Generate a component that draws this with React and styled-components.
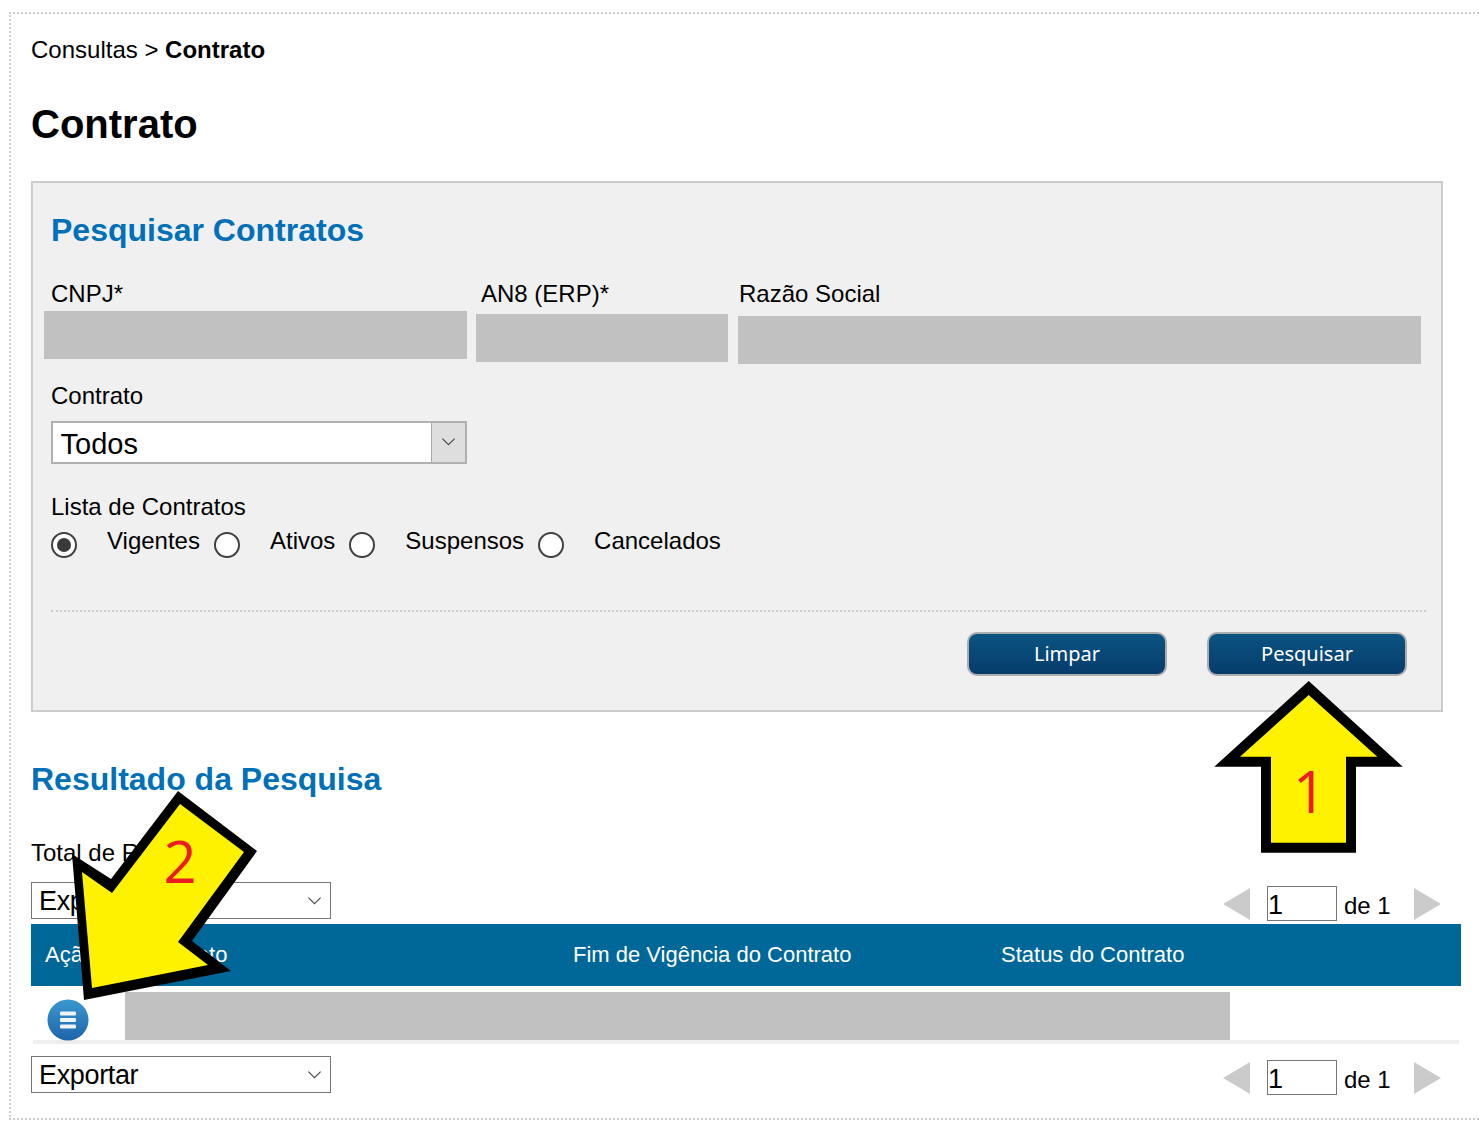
import React from 'react';
import styled, { createGlobalStyle } from 'styled-components';

const GlobalStyle = createGlobalStyle`
  html, body {
    margin: 0;
    padding: 0;
    overflow: hidden;
    background: #fff;
  }
  body {
    font-family: "Liberation Sans", Arial, sans-serif;
    font-size: 24px;
    color: #000;
  }
`;

const Page = styled.div`
  position: relative;
  width: 1479px;
  height: 1148px;
  padding-top: 12px;
  box-sizing: border-box;
`;

const Frame = styled.div`
  margin-left: 9px;
  border: 2px dotted #ccc;
  border-right: none;
  padding: 22px 0 23px 20px;
`;

const Breadcrumb = styled.div`
  line-height: 28px;
  b {
    font-weight: 700;
  }
`;

const Title = styled.h1`
  margin: 37px 0 34px;
  font-size: 40px;
  line-height: 46px;
  font-weight: 700;
`;

const Panel = styled.section`
  width: 1412px;
  box-sizing: border-box;
  border: 2px solid #ccc;
  background: #f0f0f0;
  padding: 29px 15px 34px 18px;
`;

const SectionTitle = styled.h2`
  margin: 0;
  font-size: 32px;
  line-height: 36px;
  font-weight: 700;
  color: #0070b9;
`;

const FieldRow = styled.div`
  display: flex;
  margin-top: 32px;
`;

const Field = styled.div`
  width: ${(p) => p.$width}px;
  flex: none;
`;

const Label = styled.div`
  line-height: 28px;
`;

const Redacted = styled.div`
  height: 48px;
  background: #c1c1c1;
  width: ${(p) => p.$width}px;
  margin-left: ${(p) => p.$shift}px;
  margin-top: ${(p) => p.$drop}px;
`;

const ContractLabel = styled(Label)`
  margin-top: 18px;
  margin-bottom: 11px;
`;

const ContractSelect = styled.div`
  display: flex;
  width: 416px;
  height: 43px;
  box-sizing: border-box;
  border: 2.5px solid #b0b0b0;
  background: #fff;
`;

const ContractValue = styled.div`
  flex: 1;
  padding-left: 7.5px;
  font-size: 29px;
  line-height: 42px;
`;

const ContractArrow = styled.div`
  width: 33px;
  display: flex;
  align-items: center;
  justify-content: center;
  background: #dedede;
  border-left: 1px solid #aaa;
`;

const ListLabel = styled(Label)`
  margin-top: 29px;
`;

const RadioRow = styled.div`
  display: flex;
  align-items: flex-start;
  margin-top: 6px;
  height: 31px;
`;

const Radio = styled.input.attrs({ type: 'radio', name: 'lista' })`
  appearance: none;
  flex: none;
  position: relative;
  width: 26px;
  height: 26px;
  box-sizing: border-box;
  margin: 5px 30px 0 0;
  border: 2px solid #404040;
  border-radius: 50%;
  background: #fff;
  &:checked::after {
    content: '';
    position: absolute;
    left: 4px;
    top: 4px;
    width: 14px;
    height: 14px;
    border-radius: 50%;
    background: #3a3a3a;
  }
`;

const RadioText = styled.label`
  line-height: 28px;
  margin-right: 14px;
`;

const Divider = styled.div`
  margin-top: 52px;
  border-top: 2px dotted #ccc;
`;

const Actions = styled.div`
  display: flex;
  justify-content: flex-end;
  gap: 40px;
  margin: 20px 19px 0 0;
`;

const Button = styled.button`
  width: 200px;
  height: 44px;
  box-sizing: border-box;
  border: 2px solid #adadad;
  border-radius: 10px;
  background: linear-gradient(#0a5482, #063c6b);
  color: #fff;
  font-family: "Noto Sans", sans-serif;
  font-size: 20px;
  padding: 0 0 2px;
`;

const ResultTitle = styled(SectionTitle)`
  margin-top: 49px;
`;

const Total = styled.div`
  margin-top: 42px;
  line-height: 28px;
`;

const Toolbar = styled.div`
  display: flex;
  justify-content: space-between;
  align-items: flex-start;
  width: 1430px;
  height: 39px;
  margin-top: ${(p) => p.$top}px;
`;

const ExportSelect = styled.div`
  display: flex;
  align-items: center;
  justify-content: space-between;
  width: 300px;
  height: 37px;
  box-sizing: border-box;
  border: 1.5px solid #767676;
  padding: 2px 7px 0 7px;
  font-size: 27px;
  letter-spacing: -0.35px;
  color: #000;
`;

const Pager = styled.div`
  display: flex;
  align-items: flex-start;
  margin: 4px 20px 0 0;
  height: 35px;
`;

const PageInput = styled.input`
  width: 70px;
  height: 35px;
  box-sizing: border-box;
  margin: 0 7px 0 17px;
  border: 1.5px solid #767676;
  padding: 3px 0 0 0;
  font-family: "Liberation Sans", Arial, sans-serif;
  font-size: 27px;
  color: #000;
`;

const PageOf = styled.span`
  width: 70px;
  line-height: 40px;
`;

const PageArrow = styled.svg`
  display: block;
  width: 27px;
  height: 32px;
  margin-top: 2px;
  fill: #cbcbcb;
  filter: blur(0.4px);
`;

const TableHead = styled.div`
  display: grid;
  grid-template-columns: 98px 430px 428px 1fr;
  align-items: center;
  width: 1430px;
  height: 62px;
  box-sizing: border-box;
  margin-top: 3px;
  padding: 0 0 0 14px;
  background: #006799;
  color: #fff;
  font-size: 22px;
`;

const TableRow = styled.div`
  display: flex;
  align-items: flex-start;
  width: 1426px;
  height: 54px;
  margin-left: 2px;
  box-sizing: content-box;
  border-bottom: 4px solid #eee;
`;

const RowAction = styled.svg`
  display: block;
  flex: none;
  width: 42px;
  height: 42px;
  margin: 13px 36px 0 14px;
`;

const RowBlock = styled(Redacted)`
  margin: 6px 0 0 0;
`;

const Callout = styled.svg`
  position: absolute;
  left: ${(p) => p.$left}px;
  top: ${(p) => p.$top}px;
  overflow: visible;
`;

const CalloutNumber = styled.text`
  font-family: "Open Sans", Lato, sans-serif;
  font-size: 58px;
  font-weight: 400;
  fill: #ed1c24;
  text-anchor: middle;
`;

const Chevron = ({ size = 17 }) => (
  <svg width={size} height={size * 0.6} viewBox="0 0 16 10" fill="none" stroke="#4a4a4a" strokeWidth="1.1">
    <path d="M2 1.5 L8 7.5 L14 1.5" />
  </svg>
);

const PageControls = () => (
  <Pager>
    <PageArrow viewBox="0 0 27 32"><path d="M27 0 V32 L0 16 Z" /></PageArrow>
    <PageInput defaultValue="1" />
    <PageOf>de 1</PageOf>
    <PageArrow viewBox="0 0 27 32"><path d="M0 0 V32 L27 16 Z" /></PageArrow>
  </Pager>
);

const filters = [
  { label: 'Vigentes', checked: true },
  { label: 'Ativos' },
  { label: 'Suspensos' },
  { label: 'Cancelados' },
];

const App = () => (
  <Page>
    <GlobalStyle />
    <Frame>
      <Breadcrumb>Consultas &gt; <b>Contrato</b></Breadcrumb>
      <Title>Contrato</Title>

      <Panel>
        <SectionTitle>Pesquisar Contratos</SectionTitle>
        <FieldRow>
          <Field $width={430}>
            <Label>CNPJ*</Label>
            <Redacted $width={423} $shift={-7} $drop={3} />
          </Field>
          <Field $width={258}>
            <Label>AN8 (ERP)*</Label>
            <Redacted $width={252} $shift={-5} $drop={6} />
          </Field>
          <Field $width={684}>
            <Label>Razão Social</Label>
            <Redacted $width={683} $shift={-1} $drop={8} />
          </Field>
        </FieldRow>

        <ContractLabel>Contrato</ContractLabel>
        <ContractSelect>
          <ContractValue>Todos</ContractValue>
          <ContractArrow><Chevron /></ContractArrow>
        </ContractSelect>

        <ListLabel>Lista de Contratos</ListLabel>
        <RadioRow>
          {filters.map((f) => (
            <React.Fragment key={f.label}>
              <Radio defaultChecked={f.checked} />
              <RadioText>{f.label}</RadioText>
            </React.Fragment>
          ))}
        </RadioRow>

        <Divider />
        <Actions>
          <Button>Limpar</Button>
          <Button>Pesquisar</Button>
        </Actions>
      </Panel>

      <ResultTitle>Resultado da Pesquisa</ResultTitle>
      <Total>Total de Registros</Total>

      <Toolbar $top={15}>
        <ExportSelect>Exportar<Chevron /></ExportSelect>
        <PageControls />
      </Toolbar>

      <TableHead>
        <span>Ação</span>
        <span>Contrato</span>
        <span>Fim de Vigência do Contrato</span>
        <span>Status do Contrato</span>
      </TableHead>
      <TableRow>
        <RowAction viewBox="0 0 42 42">
          <defs>
            <linearGradient id="rowAction" x1="0" y1="0" x2="0" y2="1">
              <stop offset="0" stopColor="#3a98ce" />
              <stop offset="1" stopColor="#1f64ac" />
            </linearGradient>
          </defs>
          <circle cx="21" cy="21" r="20.5" fill="url(#rowAction)" />
          <rect x="13" y="12.5" width="16" height="4" rx="1.2" fill="#eef5fa" />
          <rect x="13" y="19" width="16" height="4" rx="1.2" fill="#eef5fa" />
          <rect x="13" y="25.5" width="16" height="4" rx="1.2" fill="#eef5fa" />
        </RowAction>
        <RowBlock $width={1105} />
      </TableRow>

      <Toolbar $top={12}>
        <ExportSelect>Exportar<Chevron /></ExportSelect>
        <PageControls />
      </Toolbar>
    </Frame>

    <Callout $left={1210} $top={676} width="200" height="180" viewBox="1210 676 200 180">
      <polygon fill="#000" points="1308.7,681 1402.7,766.7 1356,766.7 1356,852.7 1261,852.7 1261,766.7 1214.3,766.7" />
      <polygon fill="#fff200" points="1308.7,695 1377.3,756.7 1346,756.7 1346,842.7 1271,842.7 1271,756.7 1240,756.7" />
      <CalloutNumber x="1309.5" y="813">1</CalloutNumber>
    </Callout>

    <Callout $left={70} $top={788} width="192" height="214" viewBox="70 788 192 214">
      <polygon fill="#000" points="178,791 257,851 192,941 231,971 84,1000 72,854 111,879" />
      <polygon fill="#fff200" points="180,804 244,852 178,942 208,965 92,988 82,872 112,893" />
      <CalloutNumber x="180" y="883">2</CalloutNumber>
    </Callout>
  </Page>
);

export default App;
